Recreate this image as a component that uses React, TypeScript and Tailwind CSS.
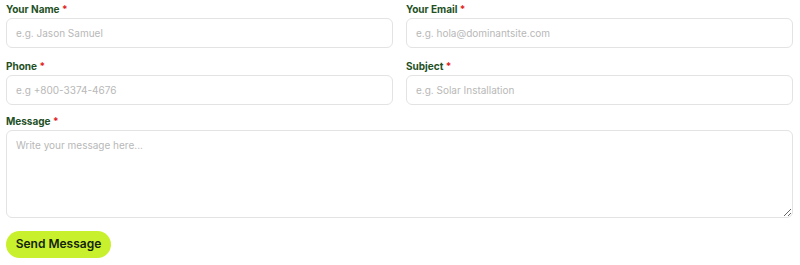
export default function App() {
  const labelCls = "mb-[3px] block text-[10px] leading-[12px] font-bold text-[#23501f]";
  const inputCls =
    "h-[30px] w-full rounded-[6px] border border-[#e3e3e3] bg-white px-[9px] text-[10px] text-[#333] placeholder:text-[#b8b8b8] outline-none";

  return (
    <div className="min-h-screen bg-white pl-[6px] pr-[7px] pt-[3px] font-['Inter','Liberation_Sans',sans-serif]">
      <form className="flex flex-col" onSubmit={(e) => e.preventDefault()}>
        <div className="grid grid-cols-2 gap-x-[13px] gap-y-[12px]">
          <div>
            <label className={labelCls}>
              Your Name <span className="text-[#e11d1d]">*</span>
            </label>
            <input className={inputCls} placeholder="e.g. Jason Samuel" />
          </div>
          <div>
            <label className={labelCls}>
              Your Email <span className="text-[#e11d1d]">*</span>
            </label>
            <input className={inputCls} placeholder="e.g. hola@dominantsite.com" />
          </div>
          <div>
            <label className={labelCls}>
              Phone <span className="text-[#e11d1d]">*</span>
            </label>
            <input className={inputCls} placeholder="e.g +800-3374-4676" />
          </div>
          <div>
            <label className={labelCls}>
              Subject <span className="text-[#e11d1d]">*</span>
            </label>
            <input className={inputCls} placeholder="e.g. Solar Installation" />
          </div>
          <div className="col-span-2 -mt-[2px]">
            <label className={labelCls}>
              Message <span className="text-[#e11d1d]">*</span>
            </label>
            <textarea
              className="block h-[88px] w-full rounded-[6px] border border-[#e3e3e3] bg-white px-[9px] py-[7px] text-[10px] text-[#333] placeholder:text-[#b8b8b8] outline-none"
              placeholder="Write your message here..."
            />
          </div>
        </div>
        <div className="mt-[12px]">
          <button
            type="submit"
            className="h-[27px] w-[105px] rounded-full bg-[#c8f02d] text-[12px] font-semibold text-[#14240f]"
          >
            Send Message
          </button>
        </div>
      </form>
    </div>
  );
}
